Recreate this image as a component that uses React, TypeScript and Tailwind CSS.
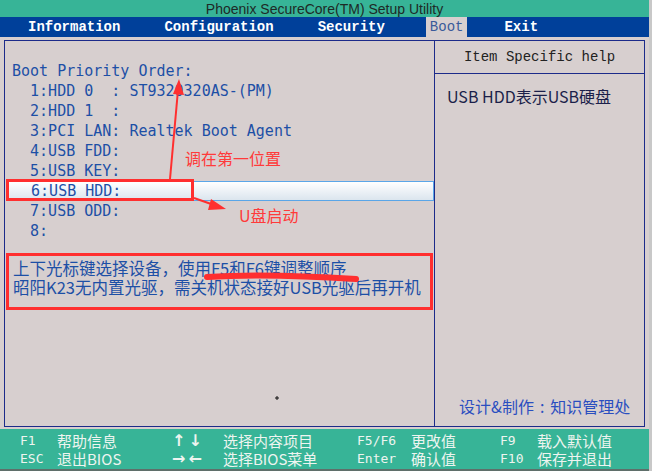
import React from "react";

const mono = "font-['DejaVu_Sans_Mono',monospace]";
const cjk = "font-['Noto_Sans_CJK_SC',sans-serif]";
const menuFont = "font-['Liberation_Mono',monospace]";

const bootRows = [
  "  1:HDD 0  : ST9320320AS-(PM)",
  "  2:HDD 1  :",
  "  3:PCI LAN: Realtek Boot Agent",
  "  4:USB FDD:",
  "  5:USB KEY:",
  "  6:USB HDD:",
  "  7:USB ODD:",
  "  8:",
];

function Annotations() {
  return (
    <>
      <svg className="absolute left-0 top-0 pointer-events-none" width="652" height="471">
        {/* arrow up to the list header */}
        <line x1="170" y1="179" x2="178" y2="90" stroke="#ff2f2f" strokeWidth="2" />
        <polygon points="179,79 173,94 184,95" fill="#ff2f2f" />
        {/* arrow to the U盘 label */}
        <line x1="194" y1="198" x2="214" y2="205" stroke="#ff2f2f" strokeWidth="2" />
        <polygon points="226,209 211,199 208,210" fill="#ff2f2f" />
        {/* marker stroke under F5/F6 */}
        <path d="M207 277 C 250 274, 310 276, 356 279" stroke="#ff2f2f" strokeWidth="6" strokeLinecap="round" fill="none" />
        {/* stray cursor */}
        <path d="M277 396 v4 M275 398 h4" stroke="#111" strokeWidth="1" />
      </svg>
      <div className="absolute left-[6px] top-[179px] w-[188px] h-[22px] border-[3px] border-[#ff2f2f]" />
      <div className={`absolute left-[185px] top-[147px] text-[16px] leading-[22px] text-[#ff3a3a] ${cjk}`}>调在第一位置</div>
      <div className={`absolute left-[239px] top-[204px] text-[16px] leading-[22px] text-[#ff3a3a] ${cjk}`}>U盘启动</div>
    </>
  );
}

function HelpKey({ k, d, kw, dw }: { k: string[]; d: string[]; kw: string; dw: string }) {
  return (
    <div className="flex">
      <div className={`${kw} leading-[18px]`}>
        <div>{k[0]}</div>
        <div>{k[1]}</div>
      </div>
      <div className={`${dw} ${cjk} text-[15px] leading-[18px]`}>
        <div>{d[0]}</div>
        <div>{d[1]}</div>
      </div>
    </div>
  );
}

export default function App() {
  return (
    <div className="relative w-[652px] h-[471px] overflow-hidden bg-[#d7cfcf] flex flex-col">
      {/* title */}
      <div className="h-[17px] bg-[#37b497] flex items-center justify-center mr-[3px]">
        <span className="font-['Liberation_Sans',sans-serif] text-[14px] text-[#1e2a26] leading-none">
          Phoenix SecureCore(TM) Setup Utility
        </span>
      </div>
      {/* menu */}
      <div className={`h-[20px] bg-[#00409a] flex items-stretch text-[14px] font-bold text-white ${menuFont} mr-[3px]`}>
        <span className="ml-[28px] flex items-center">Information</span>
        <span className="ml-[44px] flex items-center">Configuration</span>
        <span className="ml-[44px] flex items-center">Security</span>
        <span className="ml-[41px] px-[4px] flex items-center bg-[#d7cfcf] text-[#3a5a9a] font-normal">Boot</span>
        <span className="ml-[37px] flex items-center">Exit</span>
      </div>
      {/* main */}
      <div className="flex-1 pt-[3px] pb-[2px] pl-[4px] pr-[7px]">
        <div className="h-full border border-[#1c2b8a] flex">
          <div className="w-[430px] border-r border-[#1c2b8a] pt-[20px]">
            <div className={`${mono} text-[15px] leading-[20px] text-[#1d4fa6] whitespace-pre`}>
              <div className="pl-[7px]">Boot Priority Order:</div>
              {bootRows.map((r, i) => (
                <div
                  key={i}
                  className={
                    i === 5
                      ? "ml-[2px] pl-[5px] h-[20px] bg-linear-to-b from-white to-[#dbe5ee] border border-[#5aa6e8] leading-[18px]"
                      : "pl-[7px] h-[20px]"
                  }
                >
                  {r}
                </div>
              ))}
            </div>
            <div className={`mt-[12px] ml-[1px] w-[427px] h-[57px] border-[3px] border-[#ff2f2f] pl-[4px] pt-[3px] ${cjk} text-[16.5px] leading-[19px] text-[#1d4fa6] whitespace-nowrap`}>
              <div>上下光标键选择设备，使用F5和F6键调整顺序</div>
              <div>昭阳K23无内置光驱，需关机状态接好USB光驱后再开机</div>
            </div>
          </div>
          <div className="flex-1 flex flex-col">
            <div className={`h-[33px] border-b border-[#1c2b8a] flex items-center justify-center ${menuFont} text-[14px] text-[#222]`}>
              Item Specific help
            </div>
            <div className={`pl-[12px] pt-[11px] ${cjk} text-[16px] leading-[22px] text-[#1b1f4a]`}>USB HDD表示USB硬盘</div>
            <div className="flex-1" />
            <div className={`pl-[24px] pb-[9px] ${cjk} text-[16px] leading-[22px] text-[#2a4ec0] whitespace-nowrap`}>
              设计&amp;制作<span className="mx-[6px]">:</span>知识管理处
            </div>
          </div>
        </div>
      </div>
      {/* bottom help */}
      <div className={`h-[42px] bg-[#37b497] border-b-[2px] border-[#5f6f6a] mr-[3px] flex pl-[20px] pt-[3px] text-[#eef4f0]`}>
        <HelpKey k={["F1", "ESC"]} d={["帮助信息", "退出BIOS"]} kw={`w-[37px] ${mono} text-[13px]`} dw="w-[115px]" />
        <HelpKey
          k={["↑↓", "→←"]}
          d={["选择内容项目", "选择BIOS菜单"]}
          kw="w-[51px] font-['DejaVu_Sans',sans-serif] text-[16px] font-bold tracking-[3px]"
          dw="w-[134px]"
        />
        <HelpKey k={["F5/F6", "Enter"]} d={["更改值", "确认值"]} kw={`w-[54px] ${mono} text-[13px]`} dw="w-[89px]" />
        <HelpKey k={["F9", "F10"]} d={["载入默认值", "保存并退出"]} kw={`w-[37px] ${mono} text-[13px]`} dw="w-[100px]" />
      </div>
      <div className="absolute right-0 top-0 w-[3px] h-[471px] bg-[#c8c8c8]" />
      <Annotations />
    </div>
  );
}
